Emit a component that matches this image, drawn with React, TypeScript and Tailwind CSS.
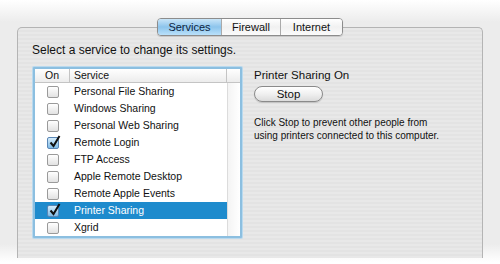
import React from 'react'

const services = [
    { name: 'Personal File Sharing', on: false },
    { name: 'Windows Sharing', on: false },
    { name: 'Personal Web Sharing', on: false },
    { name: 'Remote Login', on: true },
    { name: 'FTP Access', on: false },
    { name: 'Apple Remote Desktop', on: false },
    { name: 'Remote Apple Events', on: false },
    { name: 'Printer Sharing', on: true, selected: true },
    { name: 'Xgrid', on: false },
]

const Check = ({ on }: { on: boolean }) => (
    <div
        className={
            on
                ? 'relative h-[12px] w-[12px] rounded-[2px] border border-[#5a86b5] bg-gradient-to-b from-[#d5ecfb] to-[#7fbbe6]'
                : 'h-[12px] w-[12px] rounded-[2px] border border-[#9a9a9a] bg-gradient-to-b from-[#ffffff] to-[#e2e2e2]'
        }
    >
        {on && (
            <svg className="absolute left-[1px] top-[-3px]" width="12" height="13" viewBox="0 0 12 13">
                <path d="M1.5 7.5 L4.5 11 L10.5 1" fill="none" stroke="#111" strokeWidth="2" />
            </svg>
        )}
    </div>
)

export default function App() {
    return (
        <div
            className="flex h-[264px] w-[500px] flex-col bg-[linear-gradient(to_bottom,#ffffff_0px,#ececec_22px,#ececec_244px,#ffffff_262px)] text-[11.5px] text-[#111]"
            style={{ fontFamily: '"Liberation Sans", Arial, sans-serif' }}
        >
            <div className="relative mx-[17px] mt-[27px] h-[231px] rounded-t-[5px] border border-b-0 border-[#b4b4b4] bg-[#e6e6e6] bg-[repeating-linear-gradient(to_bottom,#e8e8e8_0px,#e8e8e8_2px,#e3e3e3_2px,#e3e3e3_4px)]">
                {/* tabs */}
                <div className="absolute left-[139px] top-[-10px] flex h-[18px] overflow-hidden rounded-[4px] border border-[#8c8c8c] text-[11px] shadow-[0_1px_1px_rgba(0,0,0,0.15)]">
                    <div className="flex w-[63px] items-center justify-center bg-gradient-to-b from-[#c9e5f8] via-[#8cc4ec] to-[#b9e0fa] text-[#0c2340]">
                        Services
                    </div>
                    <div className="flex w-[59px] items-center justify-center border-l border-[#aaa] bg-gradient-to-b from-[#ffffff] via-[#f1f1f1] to-[#fbfbfb]">
                        Firewall
                    </div>
                    <div className="flex w-[62px] items-center justify-center border-l border-[#aaa] bg-gradient-to-b from-[#ffffff] via-[#f1f1f1] to-[#fbfbfb]">
                        Internet
                    </div>
                </div>

                <div className="pl-[14px] pt-[15px] text-[12px] leading-[14px]">Select a service to change its settings.</div>

                <div className="mt-[10px] flex">
                    {/* list */}
                    <div className="ml-[15px] w-[209px] rounded-[1px] border-[2px] border-[#8cbfe0] bg-white text-[10.5px] shadow-[0_0_0_1px_#b9d9ee]">
                        <div className="flex h-[14px] border-b border-[#c4c4c4] bg-gradient-to-b from-[#ffffff] to-[#ececec] leading-[13px]">
                            <div className="w-[35px] border-r border-[#c4c4c4] text-center">On</div>
                            <div className="w-[157px] border-r border-[#c4c4c4] pl-[4px]">Service</div>
                            <div className="flex-1" />
                        </div>
                        <div className="flex">
                            <div className="w-[192px]">
                                {services.map((s) => (
                                    <div
                                        key={s.name}
                                        className={
                                            s.selected
                                                ? 'flex h-[17px] items-center bg-[#1e8bcd] text-white'
                                                : 'flex h-[17px] items-center'
                                        }
                                    >
                                        <div className="flex w-[35px] justify-center">
                                            <Check on={s.on} />
                                        </div>
                                        <div className="pl-[4px]">{s.name}</div>
                                    </div>
                                ))}
                            </div>
                            <div className="flex-1 border-l border-[#dcdcdc] bg-gradient-to-r from-[#f4f4f4] to-[#ffffff]" />
                        </div>
                    </div>

                    {/* detail */}
                    <div className="ml-[12px] flex flex-col">
                        <div className="mt-[1px] leading-[14px]">Printer Sharing On</div>
                        <button className="mt-[4px] h-[16px] w-[69px] rounded-full border border-[#8a8a8a] bg-gradient-to-b from-[#ffffff] via-[#f0f0f0] to-[#dcdcdc] leading-[14px] shadow-[0_1px_1px_rgba(0,0,0,0.15)]">
                            Stop
                        </button>
                        <div className="mt-[14px] text-[10px] leading-[13px]">
                            Click Stop to prevent other people from
                            <br />
                            using printers connected to this computer.
                        </div>
                    </div>
                </div>
            </div>
        </div>
    )
}
